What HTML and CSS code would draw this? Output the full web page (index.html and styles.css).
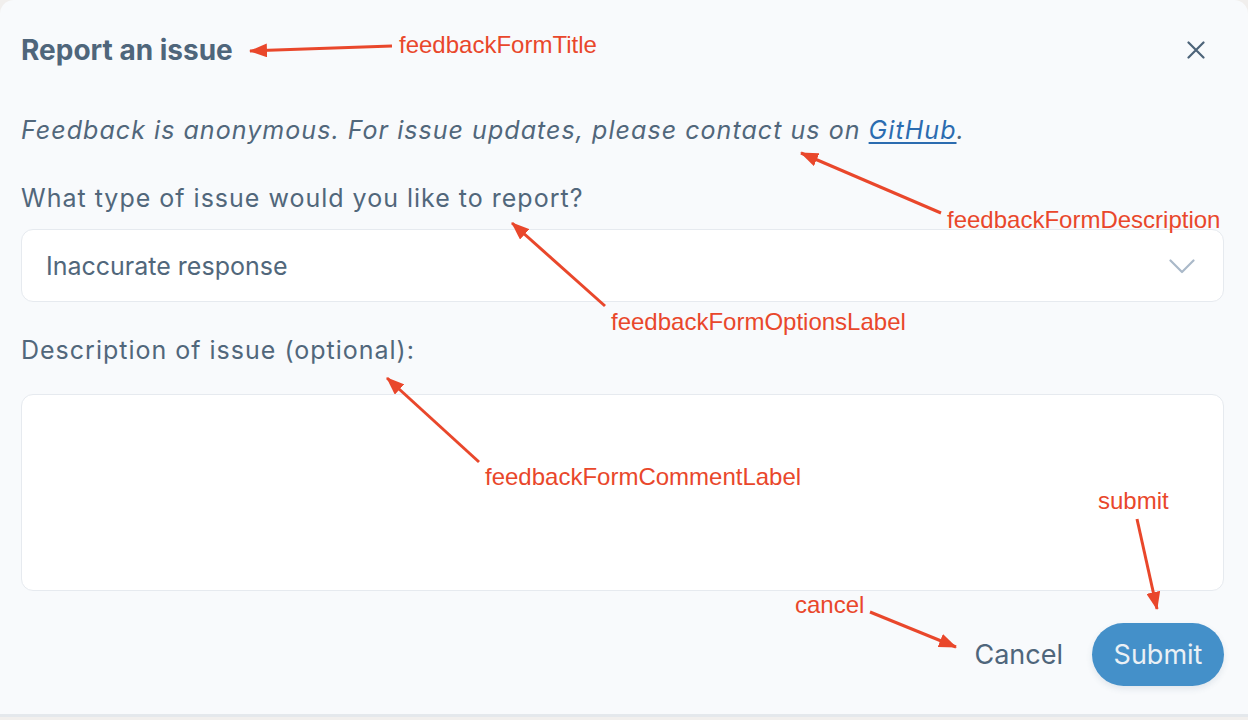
FILE: index.html
```html
<!DOCTYPE html>
<html lang="en">
<head>
<meta charset="utf-8">
<title>Report an issue</title>
<link rel="stylesheet" href="styles.css">
</head>
<body>
<div class="dialog">
  <div class="header">
    <h2 class="title">Report an issue</h2>
    <button class="close" aria-label="Close">
      <svg width="18" height="18" viewBox="0 0 18 18"><path d="M1.5 1.5 L16.5 16.5 M16.5 1.5 L1.5 16.5" stroke="#4d6479" stroke-width="2.2" stroke-linecap="round" fill="none"/></svg>
    </button>
  </div>
  <p class="desc">Feedback is anonymous. For issue updates, please contact us on <a href="#">GitHub</a>.</p>
  <label class="label label-type">What type of issue would you like to report?</label>
  <div class="select">
    <span class="select-text">Inaccurate response</span>
    <svg class="chev" width="26" height="15" viewBox="0 0 26 15"><path d="M1.5 1.5 L13 13 L24.5 1.5" stroke="#aab9c9" stroke-width="2.2" fill="none" stroke-linecap="round" stroke-linejoin="round"/></svg>
  </div>
  <label class="label label-comment">Description of issue (optional):</label>
  <div class="textarea"></div>
  <div class="actions">
    <button class="btn-cancel">Cancel</button>
    <button class="btn-submit">Submit</button>
  </div>
</div>

<div class="annot">
  <svg class="arrows" width="1248" height="720" viewBox="0 0 1248 720">
    <defs>
      <marker id="ah" viewBox="0 0 18 14" refX="17" refY="7" markerWidth="18" markerHeight="14" markerUnits="userSpaceOnUse" orient="auto">
        <path d="M0 0 L18 7 L0 14 Z" fill="#e9472b"/>
      </marker>
    </defs>
    <g stroke="#e9472b" stroke-width="3" fill="none" marker-end="url(#ah)">
      <line x1="392" y1="46" x2="250" y2="51"/>
      <line x1="941" y1="213" x2="801" y2="153"/>
      <line x1="605" y1="306" x2="512" y2="223"/>
      <line x1="479" y1="462" x2="387" y2="378"/>
      <line x1="1137" y1="519" x2="1157" y2="609"/>
      <line x1="870" y1="612" x2="956" y2="647"/>
    </g>
  </svg>
  <span class="note n-title">feedbackFormTitle</span>
  <span class="note n-desc">feedbackFormDescription</span>
  <span class="note n-opt">feedbackFormOptionsLabel</span>
  <span class="note n-com">feedbackFormCommentLabel</span>
  <span class="note n-sub">submit</span>
  <span class="note n-can">cancel</span>
</div>
</body>
</html>
```
FILE: styles.css
```css
* { box-sizing: border-box; }
html, body { margin: 0; padding: 0; }
body {
  width: 1248px;
  height: 720px;
  background: #f1efed;
  font-family: Inter, "Noto Sans", sans-serif;
  color: #51677b;
  position: relative;
  overflow: hidden;
}
.dialog {
  height: 717px;
  background: #f8fafc;
  border-radius: 14px 14px 0 0;
  border-bottom: 3px solid #e4e8ec;
  padding: 35px 24px 0 21px;
  display: flex;
  flex-direction: column;
}
.header {
  display: flex;
  align-items: center;
  justify-content: space-between;
  height: 30px;
}
.title {
  margin: 0;
  font-size: 28px;
  font-weight: 700;
  line-height: 30px;
  color: #4f667b;
}
.close {
  background: none;
  border: 0;
  padding: 0;
  width: 18px;
  height: 18px;
  margin-right: 19px;
  display: flex;
}
.desc {
  margin: 50px 0 0;
  font-size: 25px;
  font-style: italic;
  letter-spacing: 1.05px;
  line-height: 30px;
}
.desc a { color: #2b6cb0; text-decoration: underline; text-underline-offset: 3px; }
.label {
  display: block;
  font-size: 25px;
  letter-spacing: 1px;
  line-height: 30px;
}
.label-type { margin-top: 38px; }
.select {
  margin-top: 16px;
  height: 73px;
  background: #fff;
  border: 1.5px solid #e6eaef;
  border-radius: 12px;
  display: flex;
  align-items: center;
  justify-content: space-between;
  padding: 0 28px 0 24px;
}
.select-text { font-size: 25px; }
.chev { margin-top: 2px; }
.label-comment { margin-top: 33px; }
.textarea {
  margin-top: 29px;
  height: 197px;
  background: #fff;
  border: 1.5px solid #e6eaef;
  border-radius: 12px;
}
.actions {
  margin-top: 32px;
  display: flex;
  justify-content: flex-end;
  align-items: center;
  gap: 29px;
}
.btn-cancel {
  background: none;
  border: 0;
  padding: 0;
  font-family: inherit;
  font-size: 27px;
  color: #4f667b;
}
.btn-submit {
  height: 63px;
  width: 132px;
  border: 0;
  border-radius: 32px;
  background: #4490c9;
  color: #eaf0f5;
  font-family: inherit;
  font-size: 27px;
  box-shadow: 0 3px 6px rgba(60, 90, 120, 0.12);
}
.annot {
  position: absolute;
  inset: 0;
  pointer-events: none;
}
.arrows { position: absolute; left: 0; top: 0; }
.note {
  position: absolute;
  font-family: "Liberation Sans", Arial, sans-serif;
  font-size: 24px;
  line-height: 28px;
  color: #e9472b;
  white-space: nowrap;
}
.n-title { left: 399px; top: 31px; }
.n-desc { left: 947px; top: 206px; }
.n-opt { left: 611px; top: 308px; }
.n-com { left: 485px; top: 463px; }
.n-sub { left: 1098px; top: 487px; }
.n-can { left: 795px; top: 591px; }
```
